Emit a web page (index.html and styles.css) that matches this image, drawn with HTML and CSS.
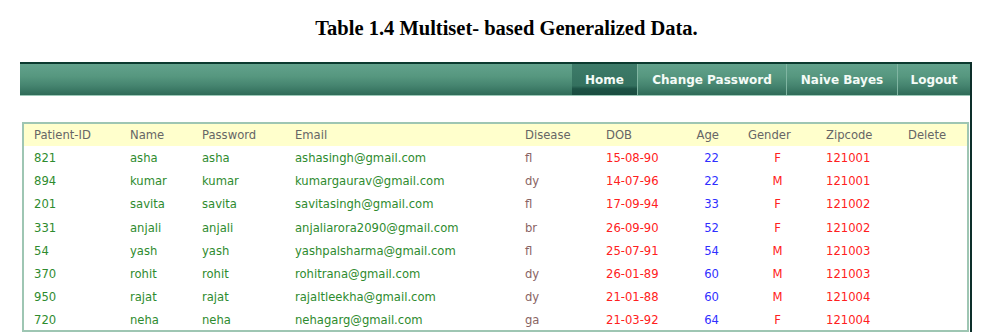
FILE: index.html
```html
<!DOCTYPE html>
<html lang="en">

<head>
    <meta charset="UTF-8">
    <title>Multiset- based Generalized Data</title>
    <link rel="stylesheet" href="styles.css">
</head>

<body>
    <h1 class="caption">Table 1.4 Multiset- based Generalized Data.</h1>

    <div class="page">
        <div class="menubar">
            <a class="menu-item active w-home" href="#">Home</a>
            <a class="menu-item w-change" href="#">Change Password</a>
            <a class="menu-item w-bayes" href="#">Naive Bayes</a>
            <a class="menu-item w-logout" href="#">Logout</a>
        </div>

        <div class="content">
            <table class="patients">
                <colgroup>
                    <col class="w-id">
                    <col class="w-name">
                    <col class="w-pass">
                    <col class="w-email">
                    <col class="w-disease">
                    <col class="w-dob">
                    <col class="w-age">
                    <col class="w-gender">
                    <col class="w-zip">
                    <col>
                </colgroup>
                <thead>
                    <tr>
                        <th>Patient-ID</th>
                        <th>Name</th>
                        <th>Password</th>
                        <th>Email</th>
                        <th>Disease</th>
                        <th>DOB</th>
                        <th class="age">Age</th>
                        <th class="gender-head">Gender</th>
                        <th>Zipcode</th>
                        <th>Delete</th>
                    </tr>
                </thead>
                <tbody id="rows"></tbody>
            </table>
        </div>
    </div>

    <script>
        const patients = [
            ['821', 'asha', 'asha', 'ashasingh@gmail.com', 'fl', '15-08-90', '22', 'F', '121001'],
            ['894', 'kumar', 'kumar', 'kumargaurav@gmail.com', 'dy', '14-07-96', '22', 'M', '121001'],
            ['201', 'savita', 'savita', 'savitasingh@gmail.com', 'fl', '17-09-94', '33', 'F', '121002'],
            ['331', 'anjali', 'anjali', 'anjaliarora2090@gmail.com', 'br', '26-09-90', '52', 'F', '121002'],
            ['54', 'yash', 'yash', 'yashpalsharma@gmail.com', 'fl', '25-07-91', '54', 'M', '121003'],
            ['370', 'rohit', 'rohit', 'rohitrana@gmail.com', 'dy', '26-01-89', '60', 'M', '121003'],
            ['950', 'rajat', 'rajat', 'rajaltleekha@gmail.com', 'dy', '21-01-88', '60', 'M', '121004'],
            ['720', 'neha', 'neha', 'nehagarg@gmail.com', 'ga', '21-03-92', '64', 'F', '121004']
        ];

        const rows = document.getElementById('rows');
        patients.forEach(p => {
            rows.innerHTML += `
                <tr>
                    <td class="green">${p[0]}</td>
                    <td class="green">${p[1]}</td>
                    <td class="green">${p[2]}</td>
                    <td class="green">${p[3]}</td>
                    <td class="brown">${p[4]}</td>
                    <td class="red">${p[5]}</td>
                    <td class="blue age">${p[6]}</td>
                    <td class="red gender">${p[7]}</td>
                    <td class="red">${p[8]}</td>
                    <td></td>
                </tr>`;
        });
    </script>
</body>

</html>
```

FILE: styles.css
```css
body {
    margin: 0;
    padding: 0;
    background: #ffffff;
    font-family: "DejaVu Sans", Verdana, sans-serif;
}

.caption {
    margin: 0;
    padding-top: 17px;
    height: 45px;
    box-sizing: border-box;
    text-align: center;
    font-family: "Liberation Serif", "Times New Roman", serif;
    font-size: 20.5px;
    font-weight: bold;
    color: #000;
    padding-left: 14px;
}

.page {
    margin: 17px 0 0 20px;
    width: 952px;
    border-right: 2px solid #0d2f2a;
    box-sizing: border-box;
    height: 280px;
}

.menubar {
    display: flex;
    justify-content: flex-end;
    height: 31px;
    border-top: 2px solid #0b3a2f;
    border-bottom: 1px solid #9cc9b8;
    background: linear-gradient(to bottom, #62a28c 0%, #56977f 40%, #45846f 70%, #2f6b58 100%);
}

.menu-item {
    display: flex;
    align-items: center;
    justify-content: center;
    box-sizing: border-box;
    border-left: 1px solid #80b5a2;
    color: #f4fbf7;
    font-size: 12px;
    font-weight: bold;
    text-decoration: none;
}

.w-home { width: 65px; }
.w-change { width: 149px; }
.w-bayes { width: 111px; }
.w-logout { width: 73px; }

.menu-item.active {
    border-left: none;
    background: linear-gradient(to bottom, #3e7c6a 0%, #34715f 70%, #1d5245 80%, #1a4c40 100%);
}

.content {
    padding: 26px 0 0 2px;
}

.patients {
    width: 947px;
    table-layout: fixed;
    border-collapse: collapse;
    border: 2px solid #9ec6b3;
    font-size: 11.6px;
}

.w-id { width: 97px; }
.w-name { width: 72px; }
.w-pass { width: 93px; }
.w-email { width: 230px; }
.w-disease { width: 81px; }
.w-dob { width: 70px; }
.w-age { width: 63px; }
.w-gender { width: 87px; }
.w-zip { width: 82px; }

.patients th {
    height: 22px;
    padding: 0 0 0 10px;
    background: #ffffcc;
    color: #666666;
    font-weight: normal;
    text-align: left;
}

.patients td {
    height: 23.3px;
    padding: 0 0 0 10px;
    white-space: nowrap;
}

.patients tr:last-child td {
    height: 21px;
}

.patients .age {
    text-align: right;
    padding: 0 10px 0 0;
}

.patients .gender {
    text-align: center;
}

.patients .gender-head {
    padding-left: 19px;
}

.green { color: #2e8b2e; }
.brown { color: #8a6464; }
.red { color: #ff2020; }
.blue { color: #2f2fff; }
```
